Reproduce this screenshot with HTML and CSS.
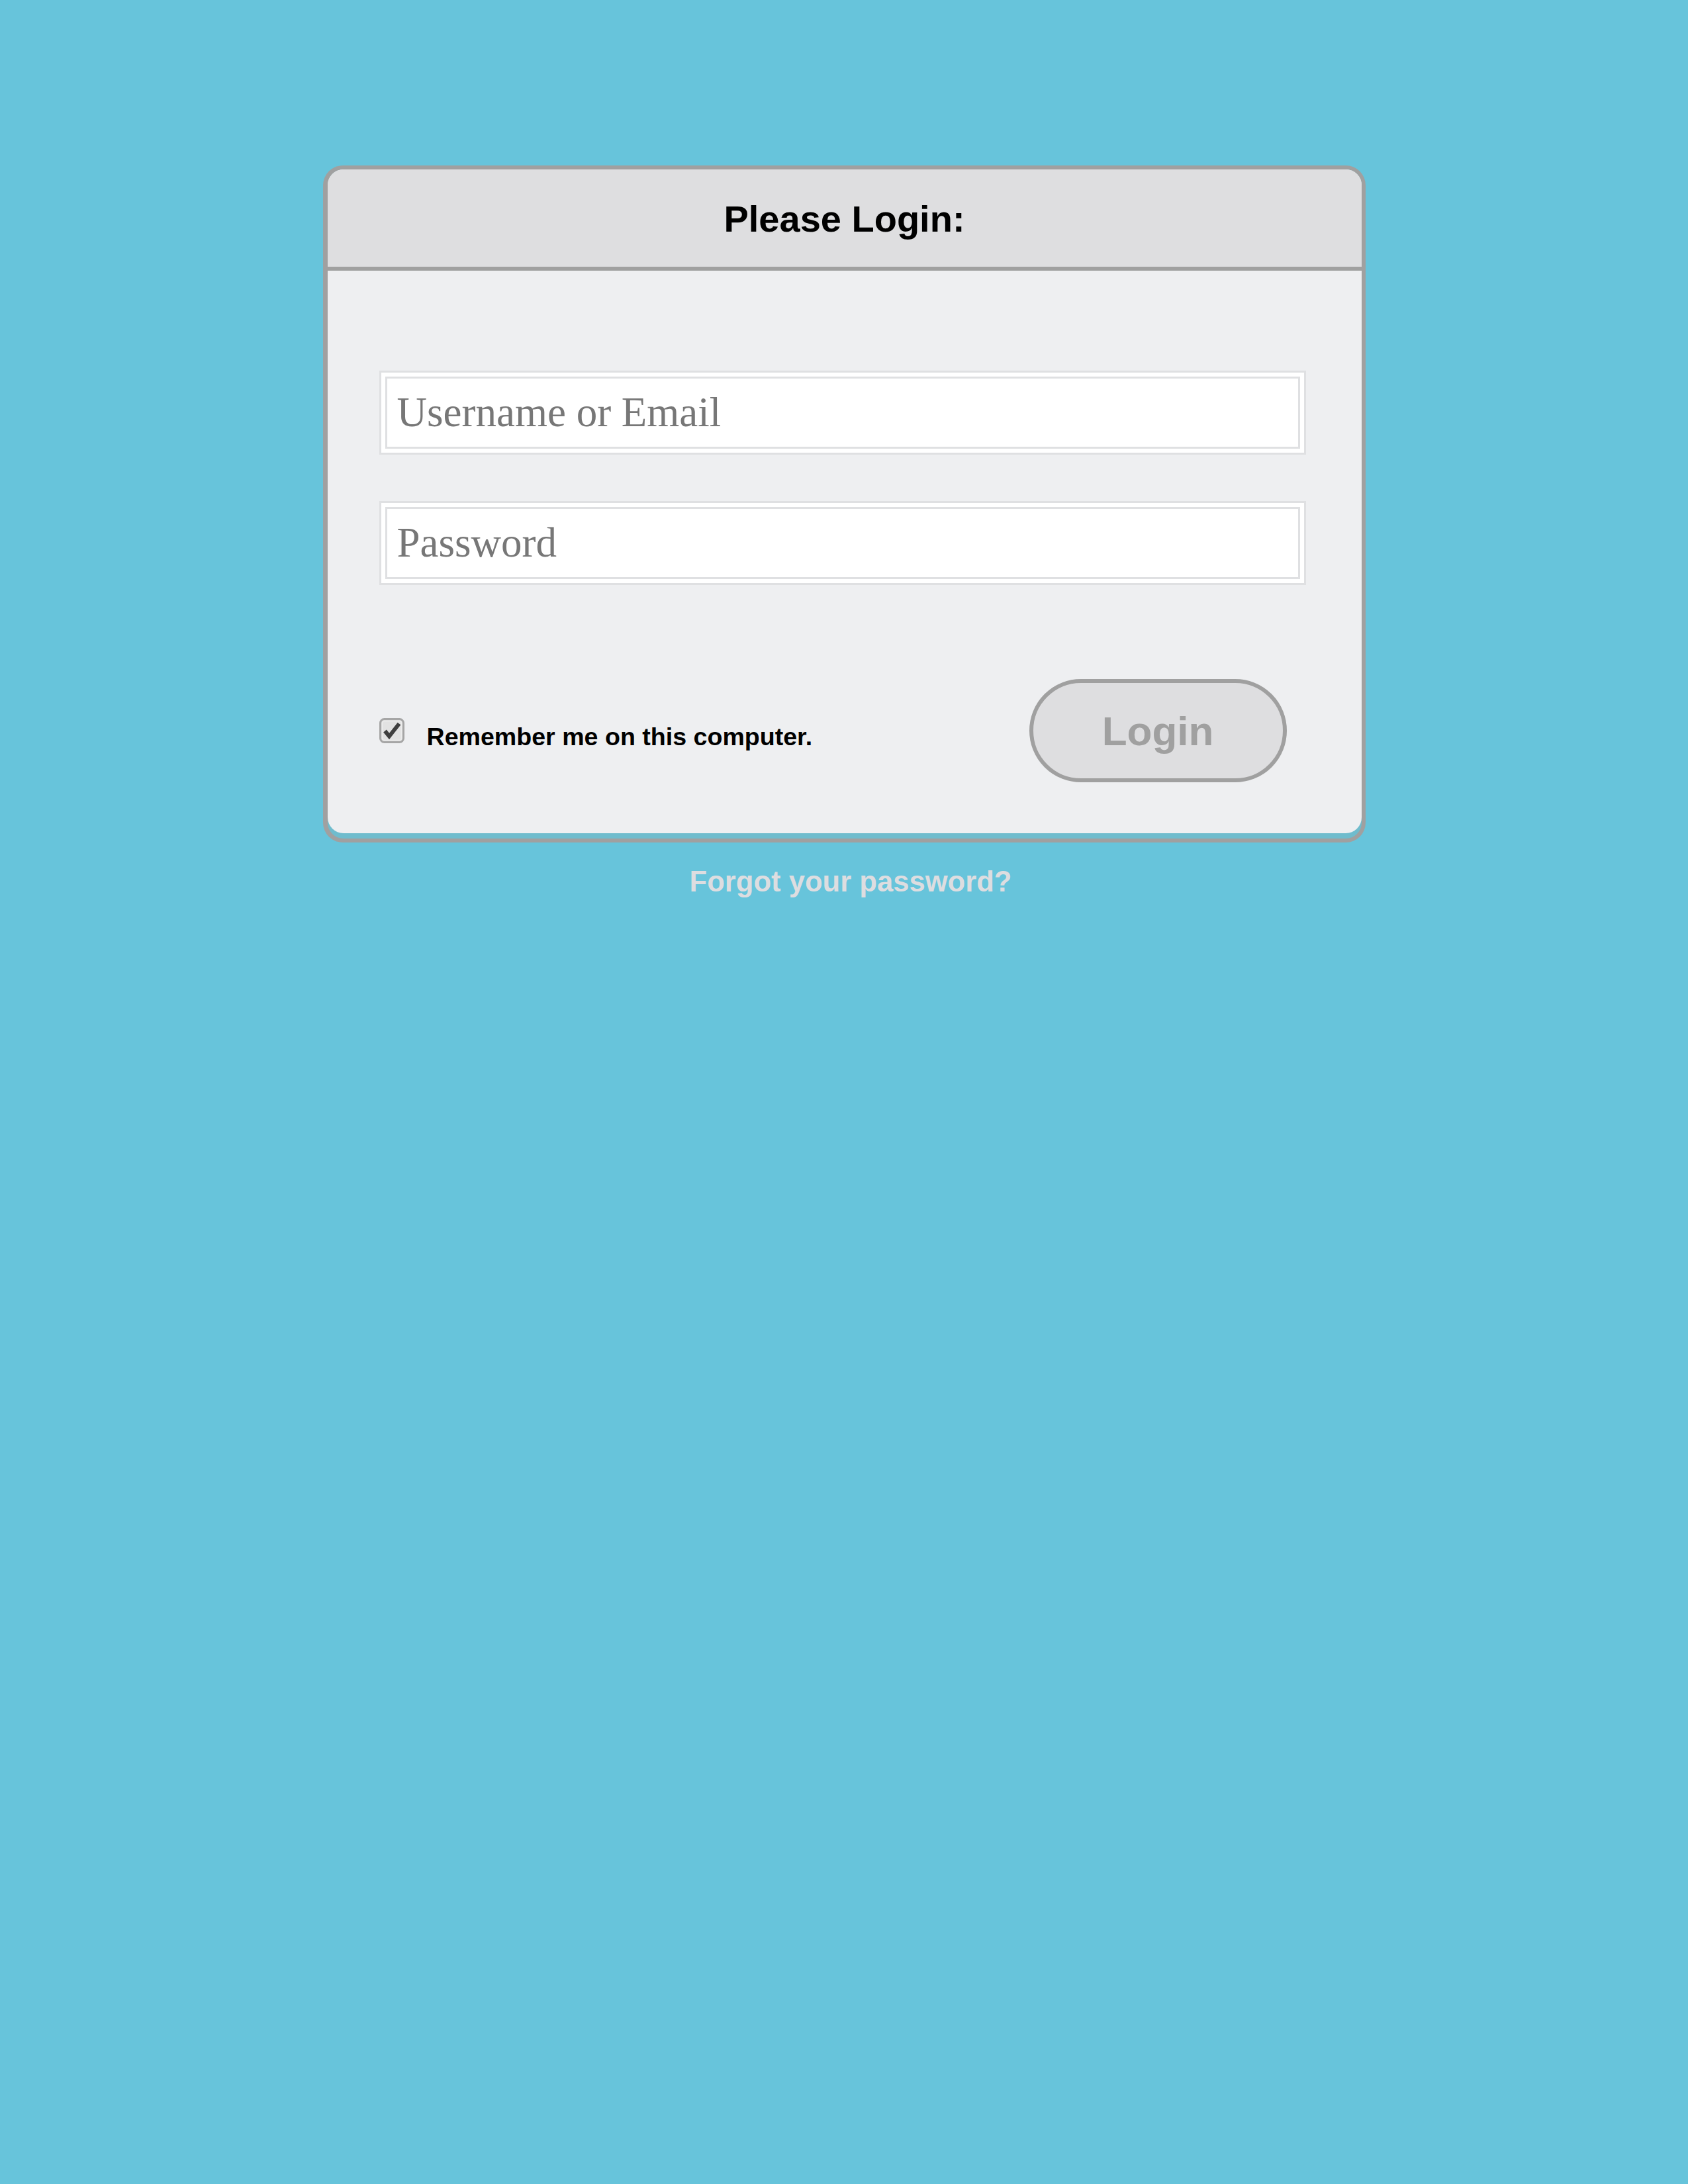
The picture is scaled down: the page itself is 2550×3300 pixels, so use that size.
FILE: index.html
```html
<!DOCTYPE html>
<html>
<head>
<meta charset="utf-8">
<title>Please Login</title>
<link rel="stylesheet" href="styles.css">
</head>
<body>
<div class="page">
  <div class="card">
    <div class="card-inner">
      <div class="panel">
        <div class="panel-header">
          <h1 class="title">Please Login:</h1>
        </div>
        <form class="panel-body">
          <div class="field">
            <input class="text-input" type="text" placeholder="Username or Email">
          </div>
          <div class="field field-second">
            <input class="text-input" type="password" placeholder="Password">
          </div>
          <div class="actions">
            <label class="remember">
              <span class="checkbox">
                <svg width="38" height="38" viewBox="0 0 38 38">
                  <rect x="1.5" y="1.5" width="35" height="35" rx="6" ry="6" fill="#dcdcdc" stroke="#a6a6a6" stroke-width="3"/>
                  <rect x="4.5" y="4.5" width="29" height="29" rx="3" ry="3" fill="#e2e2e2" stroke="#ececec" stroke-width="1.5"/>
                  <path d="M8.5 19.5 L15 27.5 L30 8.5" fill="none" stroke="#3f3f3f" stroke-width="6" stroke-linejoin="miter" stroke-linecap="butt"/>
                </svg>
              </span>
              <span class="remember-text">Remember me on this computer.</span>
            </label>
            <button class="login-btn" type="button">Login</button>
          </div>
        </form>
      </div>
    </div>
  </div>
  <div class="forgot-wrap">
    <a class="forgot" href="#">Forgot your password?</a>
  </div>
</div>
</body>
</html>
```

FILE: styles.css
```css
html, body {
  margin: 0;
  padding: 0;
}

body {
  background: #67c4db;
  font-family: "Liberation Sans", Arial, sans-serif;
  min-height: 3300px;
}

.page {
  padding-top: 250px;
}

.card {
  width: 1575px;
  margin: 0 auto;
  box-sizing: border-box;
  background: #a0a0a0;
  border-radius: 30px;
  padding: 6px 6px 6px 7px;
}

.card-inner {
  background: #6fbccd;
  border-radius: 24px;
  padding-bottom: 8px;
}

.panel {
  background: #eeeff1;
  border-radius: 24px;
  overflow: hidden;
}

.panel-header {
  height: 153px;
  box-sizing: border-box;
  padding-top: 3px;
  background: #dedee0;
  border-bottom: 6px solid #a0a0a0;
  display: flex;
  align-items: center;
  justify-content: center;
}

.title {
  margin: 0;
  font-size: 56px;
  font-weight: bold;
  color: #000;
  line-height: 1.15;
}

.panel-body {
  margin: 0;
  padding: 151px 84px 77px 78px;
  display: flex;
  flex-direction: column;
}

.field {
  border: 3px solid #dfe0e2;
  background: #fff;
  padding: 6px;
}

.field-second {
  margin-top: 70px;
}

.text-input {
  display: block;
  width: 100%;
  box-sizing: border-box;
  height: 109px;
  border: 3px solid #dfe0e2;
  background: #fff;
  margin: 0;
  padding: 0 15px;
  font-family: "Liberation Serif", "Times New Roman", serif;
  font-size: 63px;
  color: #333;
  outline: none;
}

.text-input::placeholder {
  color: #777777;
  opacity: 1;
}

.actions {
  margin-top: 142px;
  display: flex;
  align-items: center;
  justify-content: space-between;
  padding-right: 29px;
}

.remember {
  display: flex;
  align-items: center;
  cursor: pointer;
}

.checkbox {
  display: block;
  width: 38px;
  height: 38px;
}

.checkbox svg {
  display: block;
}

.remember-text {
  margin-left: 34px;
  padding-top: 18px;
  font-size: 37.6px;
  font-weight: bold;
  color: #000;
}

.login-btn {
  width: 389px;
  height: 156px;
  box-sizing: border-box;
  border: 6px solid #a0a0a0;
  border-radius: 78px;
  background: #dedee0;
  color: #a0a0a0;
  font-family: "Liberation Sans", Arial, sans-serif;
  font-size: 62px;
  font-weight: bold;
  padding: 0;
  cursor: pointer;
}

.forgot-wrap {
  margin-top: 35px;
  text-align: center;
  padding-left: 20px;
}

.forgot {
  font-size: 43.6px;
  font-weight: bold;
  color: #dddde0;
  text-decoration: none;
}
```
